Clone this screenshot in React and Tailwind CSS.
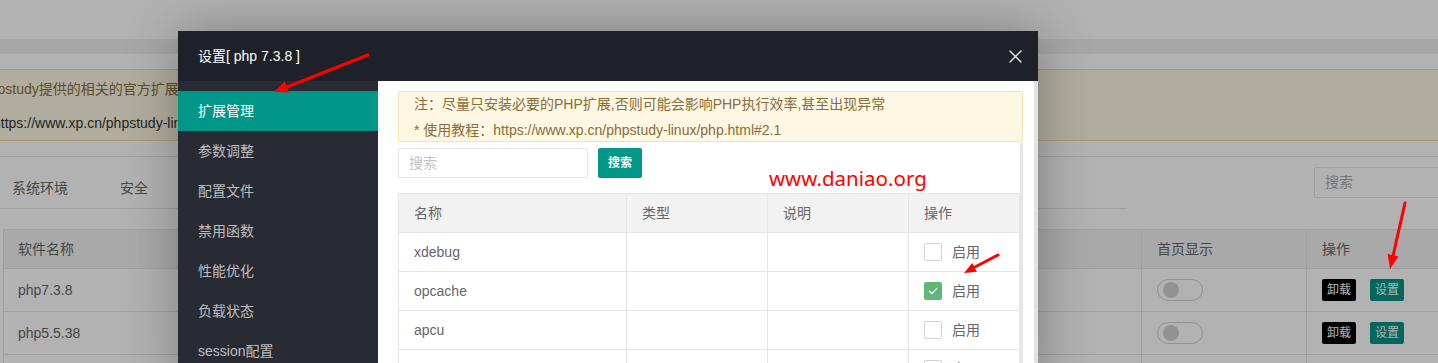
import React from "react";

const FONT = "font-['Liberation_Sans','Noto_Sans_CJK_SC',sans-serif]";

function Toggle() {
  return (
    <div className="w-[46px] h-[22px] rounded-full border border-[#d2d2d2] bg-white flex items-center">
      <div className="w-[16px] h-[16px] rounded-full bg-[#d2d2d2] ml-[5px]" />
    </div>
  );
}

function BgRow({ name }) {
  return (
    <>
      <div className="h-[43px] border-r border-b border-[#e6e6e6] flex items-center pl-[14px] text-[14px] text-[#666]">{name}</div>
      <div className="h-[43px] border-r border-b border-[#e6e6e6] flex items-center pl-[15px]">
        <Toggle />
      </div>
      <div className="h-[43px] border-b border-[#e6e6e6] flex items-center pl-[15px] gap-[14px]">
        <div className="w-[34px] h-[22px] bg-black text-white text-[12px] flex items-center justify-center rounded-[2px]">卸载</div>
        <div className="w-[34px] h-[22px] bg-[#009688] text-white text-[12px] flex items-center justify-center rounded-[2px]">设置</div>
      </div>
    </>
  );
}

function Checkbox({ checked }) {
  return checked ? (
    <div className="w-[18px] h-[18px] rounded-[2px] bg-[#5FB878] flex items-center justify-center">
      <svg width="12" height="12" viewBox="0 0 12 12">
        <path d="M2.5 6.2 L5 8.6 L9.6 3.6" fill="none" stroke="#fff" strokeWidth="1.4" strokeLinecap="round" strokeLinejoin="round" />
      </svg>
    </div>
  ) : (
    <div className="w-[18px] h-[18px] rounded-[2px] border border-[#d2d2d2] bg-white" />
  );
}

function ExtRow({ name, checked }) {
  const cell = "h-[39px] border-r border-b border-[#e6e6e6] flex items-center px-[15px] text-[14px] text-[#666]";
  return (
    <>
      <div className={cell}>{name}</div>
      <div className={cell} />
      <div className={cell} />
      <div className={cell}>
        <Checkbox checked={checked} />
        <span className="ml-[10px]">启用</span>
      </div>
    </>
  );
}

export default function App() {
  const menu = ["扩展管理", "参数调整", "配置文件", "禁用函数", "性能优化", "负载状态", "session配置"];
  const head = "h-[39px] border-r border-b border-[#e6e6e6] bg-[#f2f2f2] flex items-center px-[15px] text-[14px] text-[#666]";
  return (
    <div className={`relative w-[1438px] h-[363px] overflow-hidden bg-white ${FONT}`}>
      {/* underlying page */}
      <div className="h-[39px]" />
      <div className="h-[15px] bg-[#f0f0f0]" />
      <div className="h-[15px]" />
      <div className="h-[72px] border-y border-[#f2dca4] bg-[#fcf8e3] pt-[8px] overflow-hidden whitespace-nowrap">
        <div className="leading-[22px] text-[14px] text-[#8a6d3b] ml-[-18px]">phpstudy提供的相关的官方扩展，可根据需要自行安装或卸载，安装后可在设置中启用或禁用</div>
        <div className="leading-[22px] text-[14px] text-[#333] ml-[-7px] mt-[12px]">https://www.xp.cn/phpstudy-linux/soft.html</div>
      </div>
      <div className="h-[16px] border-b border-[#e6e6e6]" />
      <div className="h-[52px] flex">
        <div className="w-[1127px] shrink-0 border-b border-[#e6e6e6] flex pt-[21px] text-[14px] text-[#666] leading-[20px]">
          <span className="ml-[12px]">系统环境</span>
          <span className="ml-[52px]">安全</span>
        </div>
        <div className="ml-[187px] shrink-0 mt-[10px] w-[140px] h-[31px] border border-[#e6e6e6] rounded-[2px] flex items-center pl-[10px] text-[14px] text-[#aaa]">搜索</div>
      </div>
      <div className="h-[20px]" />
      <div className="ml-[3px] border-t border-l border-[#e6e6e6] grid grid-cols-[1138px_165px_1fr]">
        <div className="h-[39px] border-r border-b border-[#e6e6e6] bg-[#f2f2f2] flex items-center pl-[14px] text-[14px] text-[#666]">软件名称</div>
        <div className="h-[39px] border-r border-b border-[#e6e6e6] bg-[#f2f2f2] flex items-center pl-[15px] text-[14px] text-[#666]">首页显示</div>
        <div className="h-[39px] border-b border-[#e6e6e6] bg-[#f2f2f2] flex items-center pl-[15px] text-[14px] text-[#666]">操作</div>
        <BgRow name="php7.3.8" />
        <BgRow name="php5.5.38" />
        <BgRow name="php5.6.40" />
      </div>

      {/* shade */}
      <div className="absolute inset-0 bg-black/30" />

      {/* modal */}
      <div className="absolute left-[178px] top-[31px] w-[860px] h-[360px] bg-white shadow-[1px_1px_50px_rgba(0,0,0,0.3)] flex flex-col">
        <div className="h-[50px] shrink-0 bg-[#1f2128] flex items-center justify-between pl-[20px] pr-[16px]">
          <span className="text-white text-[14px]">设置[ php 7.3.8 ]</span>
          <svg width="13" height="13" viewBox="0 0 13 13">
            <path d="M1 1 L12 12 M12 1 L1 12" stroke="#e8e8e8" strokeWidth="1.4" strokeLinecap="round" />
          </svg>
        </div>
        <div className="flex flex-1">
          <div className="w-[200px] bg-[#282b33] pt-[10px]">
            {menu.map((m, i) => (
              <div
                key={m}
                className={`h-[40px] flex items-center pl-[20px] text-[14px] ${i === 0 ? "bg-[#009688] text-white" : "text-white/70"}`}
              >
                {m}
              </div>
            ))}
          </div>
          <div className="flex-1 flex">
            <div className="flex-1 pl-[20px] pr-[11px] pt-[10px] flex flex-col">
              <div className="h-[51px] border border-[#f5e3b3] bg-[#fdf7e3] rounded-[2px] pl-[15px] text-[14px] text-[#8a6d3b] whitespace-nowrap">
                <div className="leading-[24px]">注：尽量只安装必要的PHP扩展,否则可能会影响PHP执行效率,甚至出现异常</div>
                <div className="leading-[24px] mt-[2px]">* 使用教程：https://www.xp.cn/phpstudy-linux/php.html#2.1</div>
              </div>
              <div className="flex flex-1">
                <div className="flex-1 pt-[6px]">
                  <div className="flex">
                    <div className="w-[190px] h-[30px] border border-[#e6e6e6] rounded-[2px] flex items-center pl-[10px] text-[14px] text-[#c2c2c2]">搜索</div>
                    <div className="ml-[10px] w-[44px] h-[30px] bg-[#009688] rounded-[2px] flex items-center justify-center text-white text-[12px] font-bold">搜索</div>
                  </div>
                  <div className="mt-[15px] w-[622px] border-t border-l border-[#e6e6e6] grid grid-cols-[228px_141px_141px_111px]">
                    <div className={head}>名称</div>
                    <div className={head}>类型</div>
                    <div className={head}>说明</div>
                    <div className={head}>操作</div>
                    <ExtRow name="xdebug" checked={false} />
                    <ExtRow name="opcache" checked={true} />
                    <ExtRow name="apcu" checked={false} />
                    <ExtRow name="redis" checked={false} />
                  </div>
                </div>
                <div className="w-[3px] mt-[1px] bg-[#e6e6e6]" />
              </div>
            </div>
            <div className="w-[4px] bg-[#e2e2e2]" />
          </div>
        </div>
      </div>

      {/* watermark */}
      <div className="absolute left-[769px] top-[168px] text-[20.5px] leading-none text-[#ff0000] font-['Noto_Sans',sans-serif]">www.daniao.org</div>

      {/* arrows */}
      <svg className="absolute inset-0 pointer-events-none" width="1438" height="363" viewBox="0 0 1438 363">
        <g stroke="#ff0000" strokeWidth="3" strokeLinecap="round" fill="#ff0000">
          <line x1="368" y1="55" x2="287" y2="87" />
          <line x1="998" y1="255" x2="975" y2="267" />
          <line x1="1405" y1="203" x2="1393" y2="256" />
        </g>
        <g fill="#ff0000">
          <polygon points="274,92 284.8,81.3 289.2,92.5" />
          <polygon points="964,273 972.3,263 976.9,271.8" />
          <polygon points="1390,269 1387.7,254.1 1398.5,256.6" />
        </g>
      </svg>
    </div>
  );
}
